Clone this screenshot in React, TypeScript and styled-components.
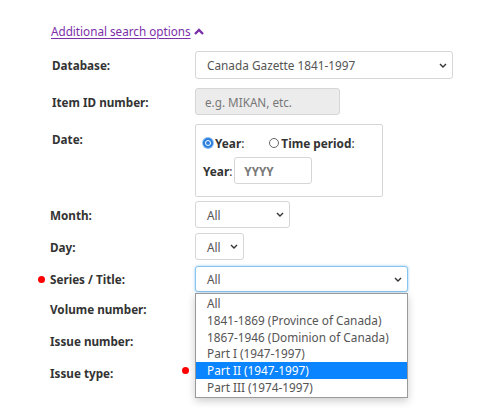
import styled, { createGlobalStyle } from 'styled-components'

const GlobalStyle = createGlobalStyle`
  html, body {
    margin: 0;
    padding: 0;
    background: #fff;
  }
  body {
    font-family: 'Noto Sans', 'Open Sans', sans-serif;
    color: #333;
  }
`

const Page = styled.div`
  width: 492px;
  height: 416px;
  position: relative;
  overflow: hidden;
  padding: 19px 0 0 51px;
  box-sizing: border-box;
`

const ToggleLink = styled.a`
  display: inline-flex;
  align-items: center;
  gap: 3px;
  color: #7b2fa8;
  font-size: 11.7px;
  text-decoration: underline;
  text-underline-offset: 2px;
  cursor: pointer;
`

const Form = styled.div`
  display: flex;
  flex-direction: column;
  margin-top: 10px;
`

const Row = styled.div<{ $gap: number; $top?: boolean }>`
  display: grid;
  grid-template-columns: 144px auto;
  align-items: ${p => (p.$top ? 'start' : 'center')};
  margin-top: ${p => p.$gap}px;
  position: relative;
`

const Label = styled.label<{ $shift?: number; $pad?: number }>`
  font-weight: 700;
  font-size: 11.7px;
  color: #333;
  margin-left: ${p => p.$shift ?? 1}px;
  padding-top: ${p => p.$pad ?? 0}px;
`

const PlainLabel = styled(Label)`
  line-height: 26px;
`

const Field = styled.div`
  display: flex;
  position: relative;
`

const SelectBox = styled.div<{ $w: number; $h: number; $focus?: boolean }>`
  box-sizing: border-box;
  width: ${p => p.$w}px;
  height: ${p => p.$h}px;
  border: 1px solid ${p => (p.$focus ? '#86c5ef' : '#d6d6d6')};
  box-shadow: ${p => (p.$focus ? '0 0 3px rgba(102, 175, 233, 0.7)' : 'none')};
  border-radius: 3px;
  background: #fff;
  display: flex;
  align-items: center;
  justify-content: space-between;
  padding: 0 5px 0 11px;
  font-size: 11.8px;
  color: #555;
`

const TextInput = styled.div<{ $w: number; $h: number; $grey?: boolean }>`
  box-sizing: border-box;
  width: ${p => p.$w}px;
  height: ${p => p.$h}px;
  border: 1px solid #d6d6d6;
  border-radius: 3px;
  background: ${p => (p.$grey ? '#ececec' : '#fff')};
  display: flex;
  align-items: center;
  padding-left: 9px;
  font-size: 11.7px;
  color: #777;
`

const DateBox = styled.div`
  box-sizing: border-box;
  width: 188px;
  height: 73px;
  border: 1px solid #d6d6d6;
  border-radius: 2px;
  padding: 10px 0 0 7px;
  display: flex;
  flex-direction: column;
  gap: 6px;
`

const RadioRow = styled.div`
  display: flex;
  align-items: center;
  gap: 25px;
`

const RadioOption = styled.span`
  display: flex;
  align-items: center;
  gap: 2px;
  font-weight: 700;
  font-size: 11.8px;
  color: #333;
`

const Radio = styled.span<{ $on?: boolean }>`
  box-sizing: border-box;
  width: 10px;
  height: 10px;
  border-radius: 50%;
  border: ${p => (p.$on ? '2px solid #2a7fe0' : '1px solid #666')};
  background: ${p => (p.$on ? '#2a7fe0' : '#fff')};
  ${p => (p.$on ? 'box-shadow: inset 0 0 0 1px #fff, 0 0 0 1px #8fbdf0;' : '')}
`

const Colon = styled.span`
  font-weight: 400;
`

const YearRow = styled.div`
  display: flex;
  align-items: center;
  gap: 2px;
  font-weight: 700;
  font-size: 11.8px;
`

const Dot = styled.span<{ $x: number }>`
  position: absolute;
  left: ${p => p.$x}px;
  top: 50%;
  width: 7px;
  height: 7px;
  margin-top: -3.5px;
  border-radius: 50%;
  background: #f00;
`

const OptionList = styled.ul`
  position: absolute;
  left: 0;
  top: 100%;
  margin: 1px 0 0 0;
  padding: 1px 0 1px;
  list-style: none;
  width: 213px;
  box-sizing: border-box;
  border: 1px solid #9a9a9a;
  background: #fff;
  box-shadow: 0 3px 8px rgba(0, 0, 0, 0.2);
  z-index: 2;
`

const Option = styled.li<{ $active?: boolean }>`
  position: relative;
  height: 16.8px;
  line-height: 16.8px;
  padding-left: 11px;
  font-size: 11.8px;
  white-space: nowrap;
  color: ${p => (p.$active ? '#fff' : '#555')};
  background: ${p => (p.$active ? '#0a84ff' : 'transparent')};
`

const Chevron = () => (
  <svg width="8" height="5" viewBox="0 0 8 5">
    <path d="M1 1l3 3 3-3" fill="none" stroke="#333" strokeWidth="1.4" />
  </svg>
)

const Caret = () => (
  <svg width="10" height="7" viewBox="0 0 10 7">
    <path d="M1 6l4-4 4 4" fill="none" stroke="#7b2fa8" strokeWidth="2.4" />
  </svg>
)

const seriesOptions = [
  'All',
  '1841-1869 (Province of Canada)',
  '1867-1946 (Dominion of Canada)',
  'Part I (1947-1997)',
  'Part II (1947-1997)',
  'Part III (1974-1997)',
]

export default function App() {
  return (
    <>
      <GlobalStyle />
      <Page>
        <ToggleLink>
          Additional search options
          <Caret />
        </ToggleLink>
        <Form>
          <Row $gap={0}>
            <Label>Database:</Label>
            <Field>
              <SelectBox $w={258} $h={28}>
                Canada Gazette 1841-1997
                <Chevron />
              </SelectBox>
            </Field>
          </Row>
          <Row $gap={9}>
            <Label>Item ID number:</Label>
            <Field>
              <TextInput $w={145} $h={27} $grey>
                e.g. MIKAN, etc.
              </TextInput>
            </Field>
          </Row>
          <Row $gap={9} $top>
            <Label $pad={7}>Date:</Label>
            <Field>
              <DateBox>
                <RadioRow>
                  <RadioOption>
                    <Radio $on />
                    <span>
                      Year<Colon>:</Colon>
                    </span>
                  </RadioOption>
                  <RadioOption>
                    <Radio />
                    <span>
                      Time period<Colon>:</Colon>
                    </span>
                  </RadioOption>
                </RadioRow>
                <YearRow>
                  <span>
                    Year<Colon>:</Colon>
                  </span>
                  <TextInput $w={78} $h={27}>
                    YYYY
                  </TextInput>
                </YearRow>
              </DateBox>
            </Field>
          </Row>
          <Row $gap={4}>
            <Label $shift={-1}>Month:</Label>
            <Field>
              <SelectBox $w={95} $h={27}>
                All
                <Chevron />
              </SelectBox>
            </Field>
          </Row>
          <Row $gap={5}>
            <Label $shift={-1}>Day:</Label>
            <Field>
              <SelectBox $w={49} $h={27}>
                All
                <Chevron />
              </SelectBox>
            </Field>
          </Row>
          <Row $gap={6}>
            <Dot $x={-13} />
            <Label $shift={-1}>Series / Title:</Label>
            <Field>
              <SelectBox $w={213} $h={26} $focus>
                All
                <Chevron />
              </SelectBox>
              <OptionList>
                {seriesOptions.map(o => (
                  <Option key={o} $active={o === 'Part II (1947-1997)'}>
                    {o === 'Part II (1947-1997)' && <Dot $x={-14} />}
                    {o}
                  </Option>
                ))}
              </OptionList>
            </Field>
          </Row>
          <Row $gap={4}>
            <PlainLabel $shift={-1}>Volume number:</PlainLabel>
          </Row>
          <Row $gap={6}>
            <PlainLabel $shift={-1}>Issue number:</PlainLabel>
          </Row>
          <Row $gap={6}>
            <PlainLabel $shift={-1}>Issue type:</PlainLabel>
          </Row>
        </Form>
      </Page>
    </>
  )
}
